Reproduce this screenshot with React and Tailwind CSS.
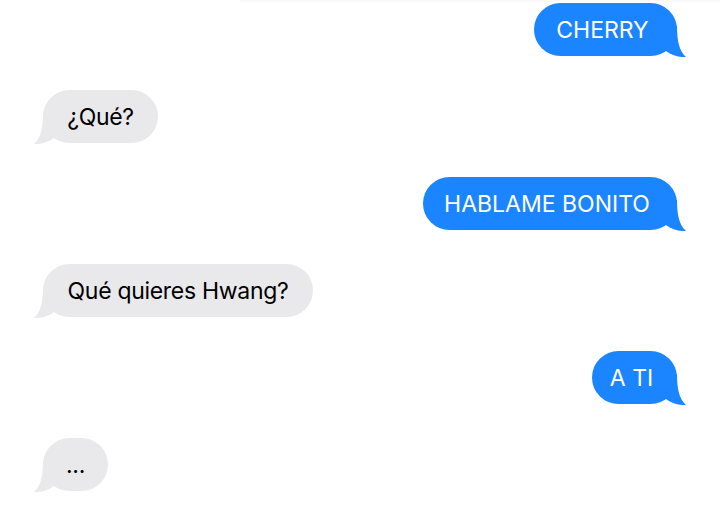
import React from "react";

const msgs = [
  { me: true, text: "CHERRY", w: "w-[143px]" },
  { me: false, text: "¿Qué?", w: "w-[115px]" },
  { me: true, text: "HABLAME BONITO", w: "w-[254px]" },
  { me: false, text: "Qué quieres Hwang?", w: "w-[270px]" },
  { me: true, text: "A TI", w: "w-[85px]" },
  { me: false, text: "...", w: "w-[65px]" },
];

function Tail({ me }) {
  return (
    <svg
      width="27"
      height="31"
      viewBox="0 0 27 31"
      className={
        me
          ? "absolute right-[-10px] bottom-[-1px]"
          : "absolute left-[-10px] bottom-[-1px] -scale-x-100"
      }
    >
      <path
        d="M0 0 H17 C17 14 19 25 26 31 C20 31.5 12 29.5 6 25 L0 20 Z"
        fill={me ? "#1b84ff" : "#e9e9eb"}
      />
    </svg>
  );
}

export default function App() {
  return (
    <div
      className="w-[720px] h-[513px] bg-white overflow-hidden"
      style={{ fontFamily: "Inter, 'Liberation Sans', sans-serif" }}
    >
      <div className="ml-[240px] w-[480px] h-[2px] bg-[#f9f9f9]" />
      <div className="flex flex-col gap-[34px] pt-[1px]">
        {msgs.map((m, i) => (
          <div
            key={i}
            className={m.me ? "flex justify-end pr-[43px]" : "flex justify-start pl-[43px]"}
          >
            <div
              className={`relative h-[53px] ${m.w} rounded-[27px] flex items-center justify-center text-[23px] ${
                m.me
                  ? "bg-[#1b84ff] text-white pr-[6px] tracking-[0px]"
                  : "bg-[#e9e9eb] text-black tracking-[-0.3px]"
              }`}
            >
              <Tail me={m.me} />
              <span className="relative whitespace-nowrap translate-y-[1px]">{m.text}</span>
            </div>
          </div>
        ))}
      </div>
    </div>
  );
}
